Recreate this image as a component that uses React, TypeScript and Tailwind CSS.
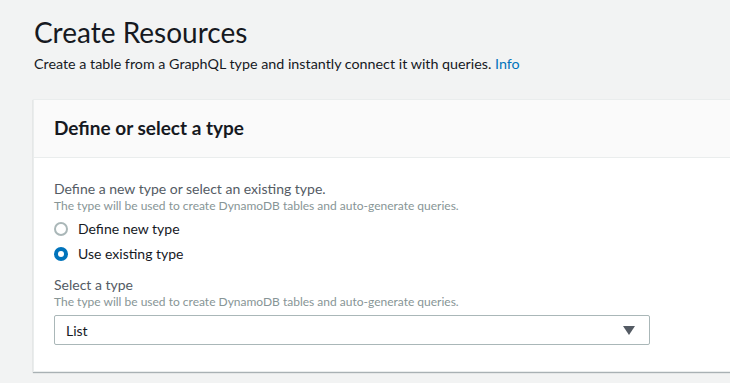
import { useState } from "react";

function RadioRow({ label, checked, onClick }: { label: string; checked: boolean; onClick: () => void }) {
    return (
        <div className="flex items-center h-[25px] cursor-pointer" onClick={onClick}>
            {checked ? (
                <span className="w-[14px] h-[14px] rounded-full bg-[#0073bb] flex items-center justify-center">
                    <span className="w-[6px] h-[6px] rounded-full bg-white" />
                </span>
            ) : (
                <span className="w-[14px] h-[14px] rounded-full border-2 border-[#aab7b8] bg-white" />
            )}
            <span className="ml-[10px] text-[14px] text-[#16191f]">{label}</span>
        </div>
    );
}

function App() {
    const [mode, setMode] = useState("existing");

    return (
        <div className="w-[730px] h-[383px] overflow-hidden bg-[#f2f3f3] font-['Lato',sans-serif]">
            <div className="pl-[34px] pt-[14px]">
                <h1 className="text-[28px] leading-[36px] text-[#16191f]">Create Resources</h1>
                <p className="text-[14.3px] leading-[20px] text-[#16191f] mt-[4px]">
                    Create a table from a GraphQL type and instantly connect it with queries.{" "}
                    <a className="text-[#0073bb]">Info</a>
                </p>
            </div>

            <div className="ml-[33px] mt-[25px] w-[720px] bg-white border border-[#eaeded] shadow-[0_1px_1px_0_rgba(0,28,36,0.3)]">
                <div className="h-[58px] bg-[#fafafa] border-b border-[#eaeded] flex items-center px-[20px]">
                    <h2 className="text-[19px] font-bold text-[#16191f]">Define or select a type</h2>
                </div>

                <div className="px-[20px] pt-[22px] pb-[26px]">
                    <div className="text-[14px] leading-[18px] text-[#545b64]">Define a new type or select an existing type.</div>
                    <div className="text-[12px] leading-[16px] text-[#879596]">The type will be used to create DynamoDB tables and auto-generate queries.</div>

                    <div className="mt-[2px]">
                        <RadioRow label="Define new type" checked={mode === "new"} onClick={() => setMode("new")} />
                        <RadioRow label="Use existing type" checked={mode === "existing"} onClick={() => setMode("existing")} />
                    </div>

                    <div className="mt-[10px] text-[14px] leading-[18px] text-[#545b64]">Select a type</div>
                    <div className="text-[12px] leading-[16px] text-[#879596]">The type will be used to create DynamoDB tables and auto-generate queries.</div>

                    <div className="mt-[5px] w-[596px] h-[30px] border border-[#aab7b8] rounded-[2px] flex items-center justify-between pl-[11px] pr-[14px]">
                        <span className="text-[14px] text-[#16191f]">List</span>
                        <svg width="12" height="9" viewBox="0 0 12 9">
                            <path d="M0 0 L12 0 L6 9 Z" fill="#545b64" />
                        </svg>
                    </div>
                </div>
            </div>
        </div>
    );
}

export default App;
